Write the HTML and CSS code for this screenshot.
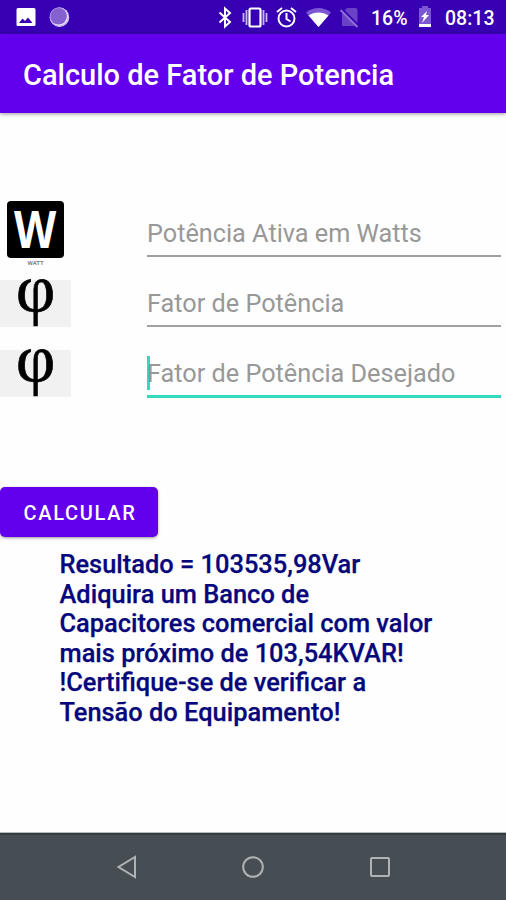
FILE: index.html
```html
<!DOCTYPE html>
<html lang="pt-BR">
<head>
    <meta charset="UTF-8">
    <meta name="viewport" content="width=device-width, initial-scale=1.0">
    <title>Calculo de Fator de Potencia</title>
    <link rel="stylesheet" href="styles.css">
</head>
<body>
    <div class="status-bar">
        <svg class="status-left" width="72" height="34" viewBox="0 0 72 34">
            <path fill="#fff" fill-rule="evenodd" d="M18 8h16a1.500 1.500 0 0 1 1.500 1.500v15a1.500 1.500 0 0 1-1.500 1.500H18a1.500 1.500 0 0 1-1.500-1.500v-15A1.500 1.500 0 0 1 18 8zM19 23h13.500l-4.500-5.500-3 3.500-2.500-2.500z"/>
            <circle cx="59.500" cy="17.200" r="9.700" fill="#f0e8fb"/>
            <circle cx="58.500" cy="16.200" r="8.400" fill="#8560cf"/>
            <circle cx="59.200" cy="16.900" r="9.200" fill="none" stroke="#b29be2" stroke-width="0.800"/>
        </svg>
        <svg class="status-icons" width="140" height="34" viewBox="220 0 140 34">
            <!-- bluetooth -->
            <path fill="none" stroke="#fff" stroke-width="2" d="M219.500 12.500l10.500 9.500-5 4.500V8.500l5 4.500-10.500 9.500"/>
            <!-- vibrate -->
            <rect x="249.500" y="8.500" width="11" height="18" rx="1.500" fill="none" stroke="#fff" stroke-width="2.200"/>
            <path stroke="#c9b9ef" stroke-width="1.800" d="M246.500 10v15M243.500 13v9M263.500 10v15M266.500 13v9"/>
            <!-- alarm -->
            <g fill="none" stroke="#fff" stroke-width="2">
                <circle cx="286.500" cy="18.500" r="8"/>
                <path d="M286.500 13v6l4 2.500M277 12l5-4M296 12l-5-4"/>
            </g>
            <!-- wifi -->
            <path fill="#7c55d3" d="M306 12.500c7-6 18-6 25 0L318.500 27z"/>
            <path fill="#fff" d="M308.500 15.500c6-4 14-4 20 0L318.500 27z"/>
            <!-- no sim -->
            <path fill="#6a42c6" d="M347 8h8.500a2 2 0 0 1 2 2v16H342V13z"/>
            <path stroke="#3700b3" stroke-width="2" d="M342 9l16 16"/>
            <path stroke="#8f70d5" stroke-width="1.800" d="M340.500 10l17 17"/>
        </svg>
        <span class="battery-text">16%</span>
        <svg class="battery" width="14" height="22" viewBox="0 0 14 22">
            <path fill="#7c55d3" d="M4 0h6v2h3v18H1V2h3z"/>
            <path fill="#fff" d="M1 18h12v3H1zM9 5l-6 6h3l-2 6 7-8H8z"/>
        </svg>
        <span class="clock">08:13</span>
    </div>

    <header class="app-bar">
        <h1>Calculo de Fator de Potencia</h1>
    </header>

    <main>
        <div class="form">
            <div class="icons">
                <div class="watt">
                    <div class="watt-tile"><span>W</span></div>
                    <div class="watt-label">WATT</div>
                </div>
                <div class="phi"><span>φ</span></div>
                <div class="phi"><span>φ</span></div>
            </div>
            <div class="fields">
                <div class="field">Potência Ativa em Watts</div>
                <div class="field">Fator de Potência</div>
                <div class="field active">Fator de Potência Desejado</div>
            </div>
        </div>

        <button class="calcular">CALCULAR</button>

        <p class="resultado">
            Resultado = 103535,98Var<br>
            Adiquira um Banco de<br>
            Capacitores comercial com valor<br>
            mais próximo de 103,54KVAR!<br>
            !Certifique-se de verificar a<br>
            Tensão do Equipamento!
        </p>
    </main>

    <nav class="nav-bar">
        <svg width="24" height="24" viewBox="0 0 24 24"><path d="M20 2v20L3.500 12z"/></svg>
        <svg width="24" height="24" viewBox="0 0 24 24"><circle cx="12" cy="12" r="9.800"/></svg>
        <svg width="24" height="24" viewBox="0 0 24 24"><rect x="3" y="3" width="18" height="18" rx="1"/></svg>
    </nav>
</body>
</html>
```

FILE: styles.css
```css
* {
    box-sizing: border-box;
}

body {
    margin: 0;
    height: 900px;
    display: flex;
    flex-direction: column;
    overflow: hidden;
    font-family: Roboto, sans-serif;
    background-color: #fefefe;
}

.status-bar {
    display: flex;
    align-items: center;
    height: 34px;
    background-color: #3700b3;
    color: white;
    font-size: 19.5px;
    font-weight: 500;
}

.status-left {
    flex-shrink: 0;
}

.status-icons {
    flex-shrink: 0;
    margin-left: 148px;
    overflow: visible;
}

.battery-text {
    width: 38px;
    margin-left: 11px;
    white-space: nowrap;
    padding-top: 2px;
}

.battery {
    flex-shrink: 0;
    margin-left: 9px;
}

.clock {
    margin-left: 13px;
    padding-top: 2px;
}

.app-bar {
    display: flex;
    align-items: center;
    height: 79px;
    padding-left: 23px;
    background-color: #6200ee;
    color: white;
    box-shadow: 0 1px 4px rgba(0, 0, 0, 0.4);
}

.app-bar h1 {
    margin: 2px 0 0;
    font-size: 29px;
    font-weight: 500;
    white-space: nowrap;
}

main {
    flex: 1;
}

.form {
    display: flex;
    gap: 76px;
    padding-top: 74px;
}

.icons {
    width: 71px;
    padding-top: 14px;
}

.watt {
    height: 79px;
    padding-left: 7px;
}

.watt-tile {
    width: 57px;
    height: 57px;
    border-radius: 4px;
    background: #000;
    color: white;
    font: 700 52px/54px "Open Sans", sans-serif;
    text-align: center;
}

.watt-tile span {
    display: inline-block;
    transform: scaleX(0.84);
}

.watt-label {
    width: 57px;
    font-size: 6px;
    line-height: 9px;
    text-align: center;
    color: #444;
}

.phi {
    height: 47px;
    margin-bottom: 23px;
    background-color: #f1f1f1;
    color: #000;
    text-align: center;
    font: 68px/18px "Liberation Serif", serif;
    -webkit-text-stroke: 0.7px #000;
}

.fields {
    width: 354px;
}

.field {
    height: 70px;
    padding-top: 30px;
    border-bottom: 2px solid #a0a0a0;
    color: #989898;
    font-size: 25.25px;
    line-height: 34px;
    white-space: nowrap;
}

.field.active {
    height: 71px;
    padding-top: 29px;
    line-height: 36px;
    border-bottom: 3px solid #34d9c0;
}

/* text cursor */
.field.active::before {
    content: "";
    display: inline-block;
    width: 3px;
    height: 34px;
    margin-right: -3px;
    vertical-align: top;
    background: #34d9c0;
}

.calcular {
    display: block;
    width: 158px;
    height: 50px;
    margin-top: 67px;
    padding: 2px 0 0 2px;
    border: none;
    border-radius: 5px;
    background-color: #6200ee;
    color: white;
    font-family: Roboto, sans-serif;
    font-size: 20px;
    font-weight: 500;
    letter-spacing: 1.7px;
    box-shadow: 0 1px 3px rgba(0, 0, 0, 0.4);
}

.resultado {
    margin: 13px 0 0 59.5px;
    color: #07077c;
    font-size: 25.42px;
    font-weight: 500;
    line-height: 29.6px;
    white-space: nowrap;
    -webkit-text-stroke: 0.25px #07077c;
}

.nav-bar {
    display: flex;
    justify-content: center;
    gap: 102.5px;
    height: 67px;
    padding-top: 20px;
    border-top: 2px solid #333c3f;
    background-color: #474e53;
    box-shadow: 0 -1px 0 #b5b9ba;
}

.nav-bar svg {
    fill: none;
    stroke: #aeb3b5;
    stroke-width: 2;
}
```
